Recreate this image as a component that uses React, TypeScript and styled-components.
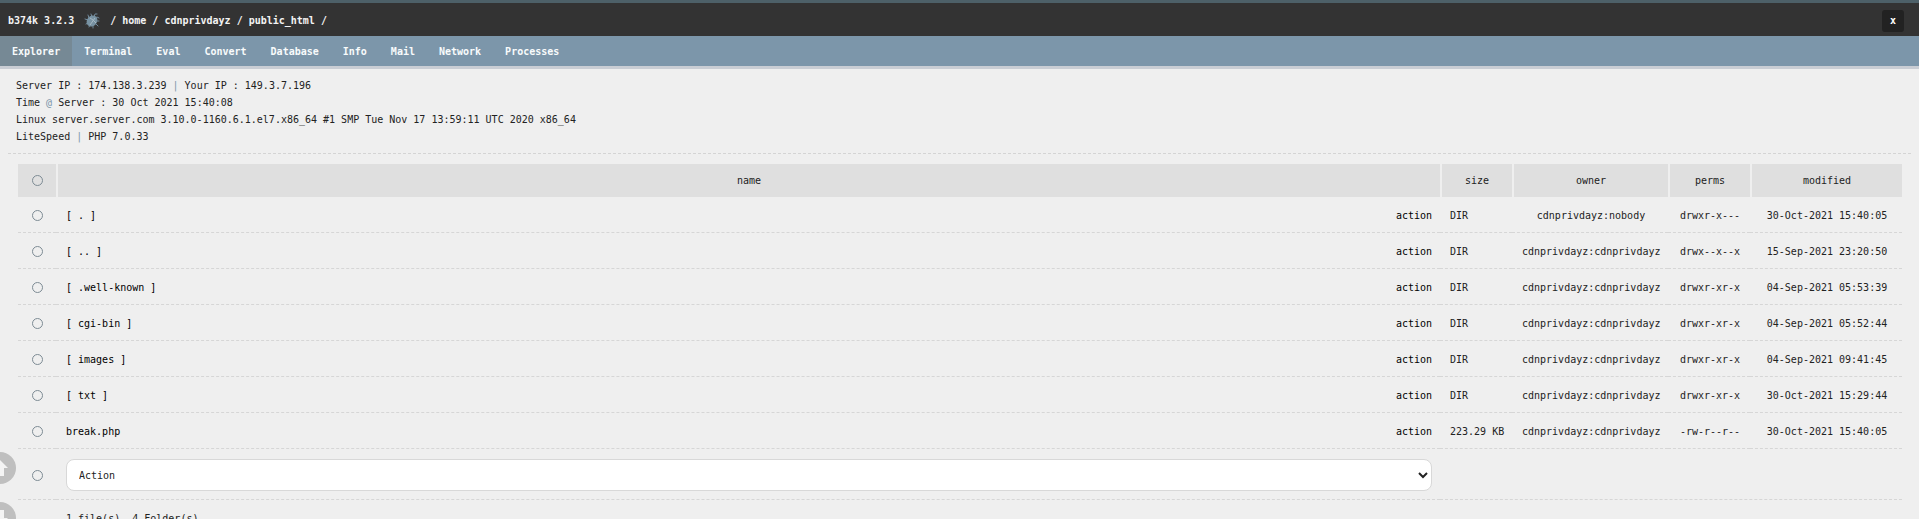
import React from "react";
import styled, { createGlobalStyle } from "styled-components";

const GlobalStyle = createGlobalStyle`
  * { box-sizing: border-box; }
  html, body { margin: 0; background: #efefef; }
  body, button, select, input {
    font-family: "DejaVu Sans Mono", "Liberation Mono", monospace;
    font-size: 10px;
    line-height: 17px;
    color: #222;
  }
  body { overflow: hidden; }
  a { color: inherit; text-decoration: none; }
`;

const Header = styled.header`
  display: flex;
  align-items: center;
  height: 36px;
  padding: 2px 15px 0 8px;
  background: #333;
  border-top: 3px solid #4d6068;
  color: #f4f4f4;
  font-weight: bold;
`;

const Brand = styled.a`
  display: flex;
  align-items: center;
  gap: 10px;
  white-space: pre;
`;

const Crumbs = styled.nav`
  display: flex;
  gap: 6px;
  flex: 1;
  margin-left: 10px;
`;

const CloseButton = styled.button`
  width: 22px;
  height: 22px;
  padding: 0;
  border: 0;
  border-radius: 3px;
  background: #222;
  color: #fff;
  font-weight: bold;
`;

const Tabs = styled.nav`
  display: flex;
  background: #7c96aa;
  border-bottom: 3px solid #c9cdd4;
`;

const Tab = styled.a<{ $active?: boolean }>`
  padding: 7px 12px 6px;
  color: #f8fbfc;
  font-weight: bold;
  background: ${(p) => (p.$active ? "#768995" : "transparent")};
`;

const Info = styled.section`
  margin: 0 8px;
  padding: 8px 8px;
  border-bottom: 1px dashed #d4d4d4;
`;

const InfoLine = styled.div`
  white-space: pre;
`;

const Muted = styled.span`
  color: #7c96aa;
`;

const Main = styled.main`
  padding: 10px 17px 0 18px;
`;

const FileTable = styled.table`
  width: 100%;
  table-layout: fixed;
  border-collapse: separate;
  border-spacing: 0;
`;

const Col = styled.col<{ $width?: number }>`
  width: ${(p) => (p.$width ? `${p.$width}px` : "auto")};
`;

const HeadCell = styled.th`
  height: 33px;
  padding: 0;
  background: #dfdfdf;
  font-weight: normal;
  text-align: center;
  & + & { border-left: 2px solid #efefef; }
`;

const Cell = styled.td<{ $align?: string; $tall?: boolean }>`
  height: ${(p) => (p.$tall ? 51 : 36)}px;
  padding: 2px 8px 0 10px;
  border-bottom: 1px dashed #d6d6d6;
  text-align: ${(p) => p.$align || "left"};
  white-space: nowrap;
`;

const CheckCell = styled(Cell)`
  padding: 2px 0 0;
  text-align: center;
`;

const NameRow = styled.div`
  display: flex;
  justify-content: space-between;
  color: #000;
`;

const Check = styled.input.attrs({ type: "checkbox" })`
  appearance: none;
  display: block;
  width: 11px;
  height: 11px;
  margin: 0 auto;
  border: 1px solid #7d8b94;
  border-radius: 50%;
  &:checked { background: #7c96aa; }
`;

const ActionSelect = styled.select`
  display: block;
  width: 100%;
  height: 32px;
  padding: 0 8px;
  border: 1px solid #d8d8d8;
  border-radius: 8px;
  background-color: #fff;
`;

const Summary = styled.td`
  height: 36px;
  padding: 0 10px;
`;

const ScrollButtons = styled.div`
  position: fixed;
  left: -16px;
  top: 452px;
  display: grid;
  gap: 18px;
`;

const ScrollButton = styled.button`
  display: grid;
  place-items: center;
  width: 32px;
  height: 32px;
  padding: 0;
  border: 0;
  border-radius: 50%;
  background: #bfbfbf;
`;

const BugIcon = () => (
  <svg width="16" height="16" viewBox="0 0 16 16" aria-hidden="true">
    <g stroke="#71899a" strokeWidth="1" fill="none" strokeLinecap="round">
      <path d="M5 5 4 2M8 4 7 1M4 7 1 6M4 10 2 11M6 12 5 14M9 13 9 15M12 11 14 13M12 8 15 8M11 5 13 4 15 5M10 4 11 1 13 1" />
    </g>
    <ellipse cx="8" cy="8" rx="5" ry="6" transform="rotate(40 8 8)" fill="#7892a2" />
    <path d="M11 5 6 12M6 5 9 7 12 10" stroke="#a7b9c3" strokeWidth="1" fill="none" />
  </svg>
);

const Arrow = ({ down }: { down?: boolean }) => (
  <svg width="18" height="18" viewBox="0 0 18 18" aria-hidden="true">
    <path
      d={down ? "M5 1h8v8h4l-8 8-8-8h4z" : "M5 17V9H1l8-8 8 8h-4v8z"}
      fill="#f4f4f4"
    />
  </svg>
);

const tabs = ["Explorer", "Terminal", "Eval", "Convert", "Database", "Info", "Mail", "Network", "Processes"];
const path = ["home", "cdnprivdayz", "public_html"];
const same = "cdnprivdayz:cdnprivdayz";
const files = [
  ["[ . ]", "DIR", "cdnprivdayz:nobody", "drwxr-x---", "30-Oct-2021 15:40:05"],
  ["[ .. ]", "DIR", same, "drwx--x--x", "15-Sep-2021 23:20:50"],
  ["[ .well-known ]", "DIR", same, "drwxr-xr-x", "04-Sep-2021 05:53:39"],
  ["[ cgi-bin ]", "DIR", same, "drwxr-xr-x", "04-Sep-2021 05:52:44"],
  ["[ images ]", "DIR", same, "drwxr-xr-x", "04-Sep-2021 09:41:45"],
  ["[ txt ]", "DIR", same, "drwxr-xr-x", "30-Oct-2021 15:29:44"],
  ["break.php", "223.29 KB", same, "-rw-r--r--", "30-Oct-2021 15:40:05"],
];

export default function App() {
  return (
    <>
      <GlobalStyle />
      <Header>
        <Brand href="#">
          b374k 3.2.3
          <BugIcon />
        </Brand>
        <Crumbs aria-label="Path">
          <a href="#">/</a>
          {path.map((p) => (
            <React.Fragment key={p}>
              <a href="#">{p}</a>
              <span>/</span>
            </React.Fragment>
          ))}
        </Crumbs>
        <CloseButton aria-label="Log out">x</CloseButton>
      </Header>
      <Tabs>
        {tabs.map((t, i) => (
          <Tab key={t} href="#" $active={i === 0}>{t}</Tab>
        ))}
      </Tabs>
      <Info>
        <InfoLine>Server IP : 174.138.3.239 <Muted>|</Muted> Your IP : 149.3.7.196</InfoLine>
        <InfoLine>Time <Muted>@</Muted> Server : 30 Oct 2021 15:40:08</InfoLine>
        <InfoLine>Linux server.server.com 3.10.0-1160.6.1.el7.x86_64 #1 SMP Tue Nov 17 13:59:11 UTC 2020 x86_64</InfoLine>
        <InfoLine>LiteSpeed <Muted>|</Muted> PHP 7.0.33</InfoLine>
      </Info>
      <Main>
        <FileTable>
          <colgroup>
            <Col $width={38} />
            <Col />
            <Col $width={72} />
            <Col $width={156} />
            <Col $width={82} />
            <Col $width={152} />
          </colgroup>
          <thead>
            <tr>
              <HeadCell><Check aria-label="Select all" /></HeadCell>
              <HeadCell>name</HeadCell>
              <HeadCell>size</HeadCell>
              <HeadCell>owner</HeadCell>
              <HeadCell>perms</HeadCell>
              <HeadCell>modified</HeadCell>
            </tr>
          </thead>
          <tbody>
            {files.map(([name, size, owner, perms, modified]) => (
              <tr key={name}>
                <CheckCell><Check aria-label={name} /></CheckCell>
                <Cell>
                  <NameRow>
                    <a href="#">{name}</a>
                    <a href="#">action</a>
                  </NameRow>
                </Cell>
                <Cell>{size}</Cell>
                <Cell $align="center">{owner}</Cell>
                <Cell $align="center">{perms}</Cell>
                <Cell $align="center">{modified}</Cell>
              </tr>
            ))}
            <tr>
              <CheckCell $tall><Check aria-label="Select all files" /></CheckCell>
              <Cell $tall>
                <ActionSelect aria-label="Action">
                  <option>Action</option>
                </ActionSelect>
              </Cell>
              <Cell $tall colSpan={4} />
            </tr>
            <tr>
              <td />
              <Summary colSpan={5}>1 file(s), 4 Folder(s)</Summary>
            </tr>
          </tbody>
        </FileTable>
      </Main>
      <ScrollButtons>
        <ScrollButton aria-label="Scroll up"><Arrow /></ScrollButton>
        <ScrollButton aria-label="Scroll down"><Arrow down /></ScrollButton>
      </ScrollButtons>
    </>
  );
}
